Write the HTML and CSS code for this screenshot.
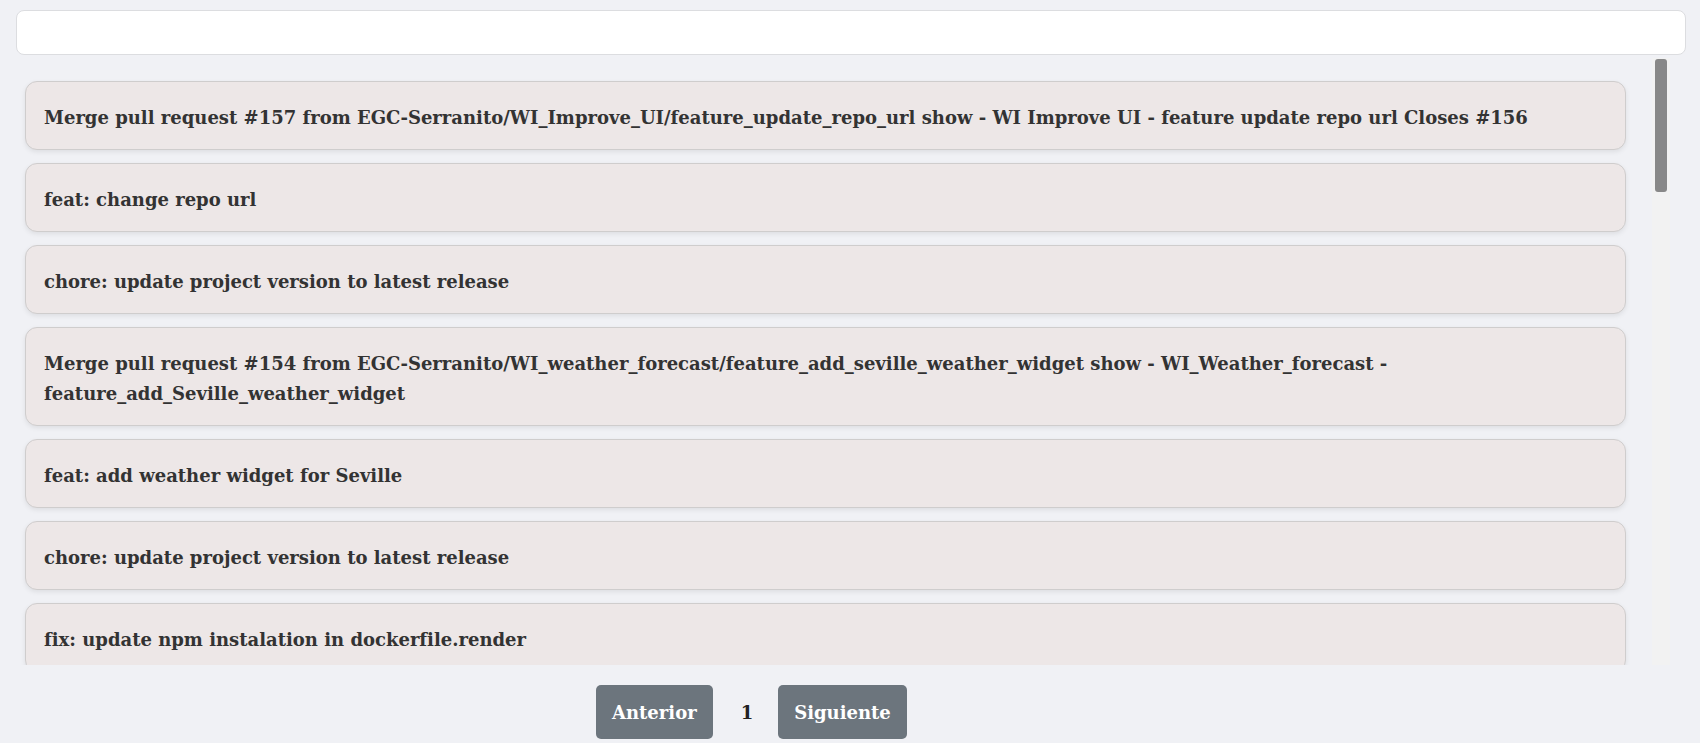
FILE: index.html
```html
<!DOCTYPE html>
<html lang="es">
<head>
<meta charset="utf-8">
<title>Commits</title>
<link rel="stylesheet" href="styles.css">
</head>
<body>
<div class="page">
  <div class="topbar"></div>
  <div class="list-wrap">
    <div class="commit-list">
      <div class="commit">Merge pull request #157 from EGC-Serranito/WI_Improve_UI/feature_update_repo_url show - WI Improve UI - feature update repo url Closes #156</div>
      <div class="commit">feat: change repo url</div>
      <div class="commit">chore: update project version to latest release</div>
      <div class="commit">Merge pull request #154 from EGC-Serranito/WI_weather_forecast/feature_add_seville_weather_widget show - WI_Weather_forecast - feature_add_Seville_weather_widget</div>
      <div class="commit">feat: add weather widget for Seville</div>
      <div class="commit">chore: update project version to latest release</div>
      <div class="commit">fix: update npm instalation in dockerfile.render</div>
    </div>
    <div class="scrollbar"><div class="thumb"></div></div>
  </div>
  <div class="pagination">
    <button class="page-btn">Anterior</button>
    <span class="page-num">1</span>
    <button class="page-btn">Siguiente</button>
  </div>
</div>
</body>
</html>
```

FILE: styles.css
```css
html, body {
  margin: 0;
  padding: 0;
}
body {
  background: #f0f1f5;
  font-family: "DejaVu Serif", serif;
  color: #333;
  overflow: hidden;
}
.page {
  padding: 10px 14px 0 16px;
}
.topbar {
  height: 43px;
  background: #fff;
  border: 1px solid #dcdde0;
  border-radius: 8px;
}
.list-wrap {
  display: flex;
  margin-top: 3px;
  height: 607px;
  width: 1654px;
}
.commit-list {
  flex: 1;
  overflow: hidden;
  padding: 23px 26px 0 9px;
}
.scrollbar {
  width: 18px;
  background: #f2f2f2;
  flex-shrink: 0;
}
.thumb {
  margin: 1px 3px 0;
  height: 133px;
  background: #888;
  border-radius: 3px;
}
.commit {
  background: #ede7e7;
  border: 1px solid #cfcdcd;
  border-radius: 12px;
  box-shadow: 0 2px 5px rgba(0, 0, 0, 0.08);
  padding: 21px 18px 16px;
  margin-bottom: 13px;
  font-weight: bold;
  font-size: 18px;
  line-height: 30px;
  color: #333;
}
.pagination {
  display: flex;
  align-items: center;
  padding: 20px 0 0 580px;
}
.page-btn {
  background: #6c757d;
  color: #fff;
  border: none;
  border-radius: 5px;
  height: 54px;
  padding: 0 16px;
  font-family: "DejaVu Serif", serif;
  font-weight: bold;
  font-size: 18px;
}
.page-num {
  margin: 0 25px 0 28px;
  font-weight: bold;
  font-size: 18px;
  color: #222;
}
```
